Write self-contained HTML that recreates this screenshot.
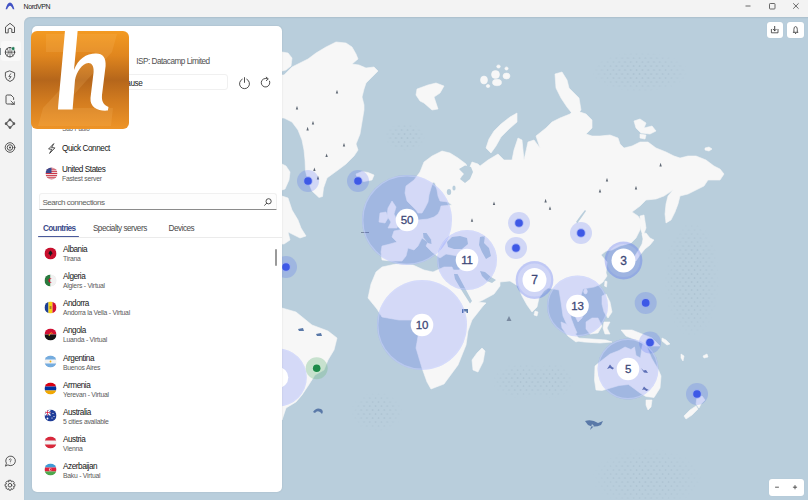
<!DOCTYPE html>
<html><head><meta charset="utf-8">
<style>
*{box-sizing:border-box}
html,body{margin:0;padding:0}
body{width:808px;height:500px;overflow:hidden;position:relative;background:#f3f3f3;font-family:"Liberation Sans",sans-serif;color:#1f1f1f}
.abs{position:absolute}
#map{position:absolute;left:23.5px;top:17px;width:785px;height:483px;background:#b9cedc;border-top-left-radius:6px;overflow:hidden}
#mapshade{position:absolute;left:23.5px;top:17px;width:785px;height:483px;border-top-left-radius:6px;box-shadow:inset 0 1px 1.5px rgba(0,0,0,0.07);pointer-events:none}
#mapsvg{position:absolute;left:-23.5px;top:-17px}
#panel{position:absolute;left:32px;top:26px;width:250px;height:466px;background:#fff;border-radius:5px;box-shadow:0 0 2px rgba(0,0,0,.12)}
.t{position:absolute;white-space:nowrap;line-height:1}
.name{font-size:8px;letter-spacing:-0.25px;color:#222}
.sub{font-size:6.3px;letter-spacing:-0.15px;color:#6a6a6a}
.flag{position:absolute;width:12px;height:12px;border-radius:50%;overflow:hidden}
.bt{font-family:"Liberation Sans",sans-serif;font-weight:normal}
</style></head>
<body>
<!-- title bar -->
<svg class="abs" style="left:5px;top:2px" width="10" height="8" viewBox="0 0 10 8"><path d="M0.6 7.2 C1.6 3.2 3.2 0.6 5 0.6 C6.8 0.6 8.4 3.2 9.4 7.2 L7.9 7.2 C7 5 6 3.8 5 3.8 C4 3.8 3 5 2.1 7.2 Z" fill="#4152c4"/></svg>
<div class="t" style="left:23.5px;top:3.3px;font-size:7px;letter-spacing:-0.4px;color:#222">NordVPN</div>
<svg class="abs" style="left:740px;top:0" width="68" height="14">
 <line x1="5.5" y1="6" x2="10.5" y2="6" stroke="#444" stroke-width="0.8"/>
 <rect x="29.5" y="3.5" width="5.5" height="5.5" rx="0.8" fill="none" stroke="#444" stroke-width="0.8"/>
 <path d="M53.2 3.3 L58.6 8.7 M58.6 3.3 L53.2 8.7" stroke="#444" stroke-width="0.8"/>
</svg>

<!-- sidebar -->
<div class="abs" style="left:1px;top:41px;width:19.5px;height:20px;background:#f9f9f9;border-radius:3px"></div>
<div class="abs" style="left:0;top:47.7px;width:1.2px;height:7.8px;background:#7f8a90"></div>
<svg class="abs" style="left:0;top:17px" width="22" height="140" viewBox="0 17 22 140" fill="none" stroke="#444" stroke-width="0.9" stroke-linejoin="round" stroke-linecap="round">
 <!-- home -->
 <path d="M5.5 32.5 V27 L10 23.3 L14.5 27 V32.5 H11.8 V29 Q10 27.4 8.2 29 V32.5 Z"/>
 <!-- globe -->
 <circle cx="10" cy="52.2" r="4.7" stroke-width="1"/>
 <path d="M10 47.5 V57 M5.3 52.2 H14.7 M7 48.5 Q10 52 7 56 M13 48.5 Q10 52 13 56" stroke-width="0.7"/>
 <circle cx="13.2" cy="48.6" r="1.9" fill="#1d7a55" stroke="#f9f9f9" stroke-width="0.6"/>
 <!-- shield -->
 <path d="M10 71 L14.6 72.8 V76.5 Q14.4 80 10 81.5 Q5.6 80 5.4 76.5 V72.8 Z"/>
 <path d="M10.7 73.8 L8.8 76.6 H11.1 L9.3 79" stroke-width="0.8"/>
 <!-- file -->
 <path d="M12.5 104 H7.2 Q6 104 6 102.8 V96.2 Q6 95 7.2 95 H11 L13.6 97.6 V99.5"/>
 <path d="M11 101 L14.3 104.3 M14.3 101.8 V104.3 H11.8" stroke-width="0.8"/>
 <!-- meshnet -->
 <path d="M10 119.5 L14.2 123.7 L10 127.9 L5.8 123.7 Z" stroke-width="1.1" stroke="#666"/>
 <circle cx="10" cy="119.8" r="1.35" fill="#5a5a5a" stroke="none"/><circle cx="10" cy="127.6" r="1.35" fill="#5a5a5a" stroke="none"/><circle cx="6.1" cy="123.7" r="1.35" fill="#5a5a5a" stroke="none"/><circle cx="13.9" cy="123.7" r="1.35" fill="#5a5a5a" stroke="none"/>
 <circle cx="10" cy="123.7" r="1.7" fill="#f3f3f3" stroke="none"/>
 <!-- target -->
 <circle cx="10" cy="147.5" r="4.8"/>
 <circle cx="10" cy="147.5" r="2.8"/>
 <circle cx="10" cy="147.5" r="1" fill="#444" stroke="none"/>
</svg>
<svg class="abs" style="left:0;top:450px" width="22" height="50" viewBox="0 450 22 50" fill="none" stroke="#444" stroke-width="0.9" stroke-linejoin="round" stroke-linecap="round">
 <path d="M5.6 465.8 L6.4 463.3 A4.8 4.8 0 1 1 8.2 465.1 Z"/>
 <path d="M9.2 459.8 Q9.6 458.6 10.6 458.8 Q11.6 459.2 11 460.2 Q10.3 460.8 10.3 461.6" stroke-width="0.7"/>
 <circle cx="10.3" cy="462.9" r="0.4" fill="#444" stroke="none"/>
 <path d="M9 480.3 H11 L11.4 481.8 L12.8 481 L14.2 482.4 L13.4 483.8 L14.9 484.2 V486.2 L13.4 486.6 L14.2 488 L12.8 489.4 L11.4 488.6 L11 490.1 H9 L8.6 488.6 L7.2 489.4 L5.8 488 L6.6 486.6 L5.1 486.2 V484.2 L6.6 483.8 L5.8 482.4 L7.2 481 L8.6 481.8 Z"/>
 <circle cx="10" cy="485.2" r="1.8"/>
</svg>

<!-- map -->
<div id="map">
<svg id="mapsvg" width="808" height="500" viewBox="0 0 808 500">
<defs>
<pattern id="dots" width="5.8" height="8" patternUnits="userSpaceOnUse"><circle cx="1.5" cy="2" r="0.85" fill="#93aabb"/><circle cx="4.4" cy="6" r="0.85" fill="#93aabb"/></pattern>
<radialGradient id="fade"><stop offset="0" stop-color="#fff" stop-opacity="1"/><stop offset="0.6" stop-color="#fff" stop-opacity="0.7"/><stop offset="1" stop-color="#fff" stop-opacity="0"/></radialGradient>
<mask id="dmask" maskUnits="userSpaceOnUse" x="0" y="0" width="808" height="500">
<ellipse cx="640" cy="72" rx="48" ry="20" fill="url(#fade)"/>
<ellipse cx="405" cy="137" rx="20" ry="14" fill="url(#fade)"/>
<ellipse cx="692" cy="280" rx="28" ry="58" fill="url(#fade)"/>
<ellipse cx="377" cy="412" rx="26" ry="20" fill="url(#fade)"/>
<ellipse cx="522" cy="381" rx="30" ry="18" fill="url(#fade)"/>
<ellipse cx="552" cy="381" rx="22" ry="18" fill="url(#fade)"/>
<ellipse cx="647" cy="478" rx="55" ry="30" fill="url(#fade)"/>
</mask>
</defs>
<rect x="0" y="0" width="808" height="500" fill="url(#dots)" mask="url(#dmask)" opacity="0.45"/>
<g id="land" fill="#f7f7f7" stroke="#f7f7f7" stroke-width="0.6" stroke-linejoin="round">
<!-- Ellesmere -->
<path d="M282 52 L288 53 L292 58 L291 66 L286 70 L282 71 Z"/>
<!-- Greenland -->
<path d="M282 75 L284 75 L292 67 L300 63 L308 59 L316 53 L326 47 L336 42 L346 43 L352 47 L356 54 L358 59 L352 64 L359 65 L366 68 L374 67 L378 71 L372 77 L366 83 L364 89 L362 97 L364 105 L364 110 L362 122 L360 134 L356 144 L358 150 L354 156 L346 164 L338 170 L327 178 L323.5 188 L322.5 196.5 L319 197.5 L312 191 L308 181 L305.5 171 L305 160 L304 150 L302 140 L298 130 L292 122 L284 118 L282 118 Z"/>
<!-- Labrador -->
<path d="M282 164 L286 166 L290 172 L289 180 L285 189 L282 190 Z M282 196 L288 198 L292 210 L298 220 L301 228 L306 236 L300 238 L292 234 L288 232 L290 240 L284 244 L282 244 Z"/>
<!-- Iceland -->
<path d="M356 174 L362 171.5 L368 172.5 L374 175 L372 180 L364 181.5 L358 180 Z"/>
<!-- Svalbard -->
<path d="M417 89 L428 85 L436 83 L444 86 L440 93 L434 97 L438 109 L432 110 L424 103 L420 101 L416 95 Z"/>
<!-- Franz Josef -->
<ellipse cx="484" cy="80" rx="3.5" ry="4"/><ellipse cx="495.5" cy="74.5" rx="4" ry="4"/><ellipse cx="497" cy="82.5" rx="4.5" ry="3.2"/><ellipse cx="506.5" cy="76" rx="3.5" ry="3"/><ellipse cx="498.5" cy="66.5" rx="1.8" ry="1.6"/><ellipse cx="506.5" cy="68.5" rx="1.6" ry="1.6"/><ellipse cx="488" cy="86" rx="1.8" ry="1.5"/>
<!-- Novaya Zemlya -->
<path d="M517 113 L510 117 L501 124 L494 131 L489 139 L486 148 L491 153 L496 146 L501 137 L509 129 L517 122 Z"/>
<!-- Severnaya Zemlya -->
<path d="M555 74 L562 72 L567 80 L569 88 L574 93 L579 98 L581 110 L575 117 L567 107 L561 98 L556 88 Z"/>
<!-- New Siberian -->
<path d="M634 121 L640 119 L646 123 L644 128 L652 126 L656 131 L650 134 L641 133 L636 128 Z"/>
<path d="M640 134 L646 135 L645 139 L640 138 Z"/>
<!-- Wrangel -->
<path d="M705 148 L709 147 L712 149 L709 151 L705 150 Z"/>
<!-- Eurasia -->
<path d="M405 193 L406 186 L414 180 L420 172 L424 162 L432 156 L442 151 L450 153 L458 158 L466 164 L468 170 L464 174 L460 178 L466 176 L472 162 L478 164 L480 166 L488 160 L498 154 L504 160 L512 160 L514 150 L518 138 L522 140 L524 160 L528 142 L534 140 L540 148 L536 136 L546 128 L552 122 L560 118 L570 114 L576 108 L580 112 L586 114 L592 120 L592 128 L586 134 L592 136 L600 136 L610 135 L618 138 L620 144 L624 148 L632 146 L640 142 L648 142 L656 148 L666 152 L674 156 L680 158 L688 156 L696 156 L706 160 L714 166 L720 169 L724 174 L720 180 L708 180 L704 186 L696 190 L688 194 L680 196 L678 204 L675 212 L671 220 L666 223 L665 214 L666 204 L668 196 L673 190 L664 196 L656 199 L646 200 L640 206 L632 212 L638 216 L642 222 L640 230 L636 238 L631 243 L620 246 L612 250 L606 251 L601 255 L607 262 L606 273 L607 276 L603 282 L599 285 L594 287 L588 288 L583 289 L581 295 L583 302 L585 310 L582 318 L578 322 L575 316 L573 308 L570 309 L571 318 L574 326 L577 333 L574 334 L568 327 L563 316 L561 302 L559 290 L554 289 L548 288 L544 291 L539 298 L537 307 L532 312 L527 305 L522 296 L518 286 L510 281 L500 282 L500 286 L494 294 L483 300 L472 305 L468 300 L465 291 L461 283 L456 276 L453 270 L459 270 L464 266 L458 256 L446 254 L440 258 L432 252 L426 246 L428 242 L422 238 L418 246 L414 250 L408 248 L406 256 L402 261 L392 261 L382 260 L381 252 L382 246 L390 244 L397 242 L392 237 L394 231 L404 229 L410 225 L418 220 L428 219 L434 217 L438 214 L440 210 L441 206 L452 205 L448 202 L440 201 L438 196 L437 190 L435 183 L433 182 L431 188 L429 195 L428 202 L425 208 L422 213 L418 213 L416 210 L412 206 L407 201 Z"/>
<!-- Great Britain / Ireland -->
<path d="M392 201 L396 207 L394 214 L398 222 L397 228 L388 228 L391 222 L387 216 L388 208 Z"/>
<path d="M380 213 L386 212 L388 218 L385 223 L379 222 Z"/>
<!-- Africa -->
<path d="M376 272 L382 267 L396 264 L413 265 L424 270 L433 272 L444 267 L452 267 L456 276 L461 283 L465 291 L469 295 L478 302 L486 303 L483 306 L472 320 L468 331 L466 345 L458 365 L444 384 L431 389 L427 382 L422 368 L416 348 L419 331 L416 320 L399 320 L382 317 L377 309 L368 298 L371 284 Z"/>
<!-- Madagascar -->
<path d="M482 348 L485 351 L483 362 L478 372 L473 370 L472 360 L477 353 Z"/>
<!-- Sri Lanka -->
<path d="M535 311 L538 312 L537 316 L534 315 Z"/>
<!-- Japan -->
<path d="M642 234 L646 233 L650 238 L654 240 L650 245 L645 249 L640 255 L636 261 L633 259 L638 251 L642 244 L643 239 Z"/>
<!-- Sakhalin / Hokkaido -->
<path d="M640 216 L644 215 L646 228 L643 236 L641 230 Z"/>
<!-- Taiwan -->
<path d="M605 281 L607 281.5 L606.5 287 L604.5 286 Z"/><ellipse cx="585.5" cy="291.5" rx="1.8" ry="2.4"/>
<!-- Philippines -->
<path d="M602 296 L606 294 L610 302 L612 312 L608 318 L604 312 L602 304 Z"/>
<!-- Sumatra -->
<path d="M561 322 L566 324 L574 332 L580 340 L576 342 L568 336 L562 328 Z"/>
<!-- Java -->
<path d="M577 338 L592 339 L606 340 L612 342 L600 343 L584 342 L577 341 Z"/>
<!-- Borneo -->
<path d="M586 322 L592 318 L598 318 L602 326 L598 333 L590 334 L586 329 Z"/>
<!-- Sulawesi -->
<path d="M604 322 L610 322 L607 328 L610 334 L605 334 L603 328 Z"/>
<!-- New Guinea -->
<path d="M621 330 L632 330 L642 334 L652 338 L660 346 L652 346 L644 344 L636 340 L626 336 Z"/>
<!-- Australia -->
<path d="M595 366 L601 361 L610 354 L619 350.5 L625 347 L631 349.5 L634.5 347 L636 355.5 L640.5 358 L642 347 L644 340 L646.5 346 L651.5 358 L658.5 370 L661 376 L660 388 L654 397.5 L646 396.5 L640 393 L634 388.5 L628.5 384.5 L619 385.5 L610.5 388 L602 390.5 L596 390 L594.5 380 Z"/>
<!-- Tasmania -->
<path d="M646 400 L652 400 L651 407 L648 410 L646 405 Z"/>
<!-- NZ -->
<path d="M697 397 L702 396 L705 400 L701 404 L699 408 L696 404 Z"/>
<path d="M696 406 L698 409 L692 415 L686 419 L684 416 L690 410 Z"/>
<!-- Pacific islands -->
<path d="M662 338 L666 340 L670 344 L667 345 L662 341 Z"/>
<path d="M681 354 L684 356 L683 361 L681 358 Z"/>
<path d="M703 356 L707 354 L708 357 L704 358 Z"/>
<!-- South America -->
<path d="M282 308 L296 312 L312 325 L328 331 L337 338 L334 350 L328 360 L324 370 L315 375 L308 386 L302 395 L296 402 L286 408 L282 420 Z"/>
</g>
<g id="water" fill="#b9cedc">
<path d="M459 169 L465 165.5 L471 167 L473 172 L470 179 L465 183 L460 179 L464 174 Z"/>
<ellipse cx="449" cy="192" rx="2.2" ry="3"/><ellipse cx="454" cy="188" rx="1.6" ry="2.5"/>
<path d="M423 233 L426.5 233 L431 239.5 L431.5 244 L428 243 L423.5 237.5 Z"/>
<path d="M576 222 Q580 216 585 210 L586 211 Q582 217 577.5 223 Z"/>
<path d="M447 242 L452 237 L460 236 L467 238 L468 244 L462 249 L454 249 L448 247 Z"/>
<path d="M480 237 L485 236 L484 243 L489 248 L491 256 L486 259 L482 252 L479 245 Z"/>
<path d="M454 274 L457.5 274 L465 288 L472 301 L470 303.5 L462 291 L455 279 Z"/>
<path d="M480 271 L485 272 L491 277 L496 280 L492 283 L487 281 L482 276 Z"/>
</g>
<g id="icons" fill="#5f6874"><path d="M337.0 89.8 L338.2 93.4 L335.8 93.4 Z"/><path d="M297.0 105.8 L298.2 109.4 L295.8 109.4 Z"/><path d="M313.0 120.8 L314.2 124.4 L311.8 124.4 Z"/><path d="M307.6 126.8 L308.8 130.4 L306.4 130.4 Z"/><path d="M344.0 142.8 L345.2 146.4 L342.8 146.4 Z"/><path d="M326.6 153.4 L327.8 157.0 L325.4 157.0 Z"/><path d="M314.4 167.4 L315.6 171.0 L313.2 171.0 Z"/><path d="M318.0 175.8 L319.2 179.4 L316.8 179.4 Z"/><path d="M660.6 162.8 L661.8 166.4 L659.4 166.4 Z"/><path d="M607.0 177.8 L608.2 181.4 L605.8 181.4 Z"/><path d="M600.0 188.8 L601.2 192.4 L598.8 192.4 Z"/><path d="M636.0 185.8 L637.2 189.4 L634.8 189.4 Z"/><path d="M494.0 201.4 L495.2 205.0 L492.8 205.0 Z"/><path d="M545.6 198.8 L546.8 202.4 L544.4 202.4 Z"/><path d="M550.0 206.2 L551.2 209.8 L548.8 209.8 Z"/><path d="M472.0 218.2 L473.2 221.8 L470.8 221.8 Z"/></g>
<g fill="#5a79a8"><path d="M313 412 Q316 407 321 409 Q324 411 322 414 L320 412 Q317 410 315 413 Z"/><path d="M585 421 Q592 419 598 423 L603 421 L601 425 Q594 428 588 425 Z M592 424 L590 430 L594 426 Z"/><path d="M462 309 H468 V313 H466.5 V311.5 H463.5 V313 H462 Z"/><path d="M607 369 L610 364.5 L612 367 L614 368 L612.5 369.5 L610 368 Z M641 368 L643.5 370.5 L646 370 L648 373 L644 372.5 Z M642 390 L644 386.5 L646 388.5 L649 390 L646.5 391 L644 389.5 Z" fill="#6676a8"/><path d="M298 329 L303 328 L304 331 L299 331 Z M316 334 L321 333 L322 336 L317 336 Z"/></g><g fill="#7a8aa0"><path d="M509 316 L511.5 321 L506.5 321 Z M361 232 H369 V233 H361 Z"/></g>
<g id="bubbles">
<circle cx="308" cy="181" r="11" fill="rgba(49,81,247,0.19)"/><circle cx="308" cy="181" r="4.7" fill="rgba(150,165,245,0.7)"/><circle cx="308" cy="181" r="3.8" fill="#3e59e6"/>
<circle cx="358" cy="181" r="11" fill="rgba(49,81,247,0.19)"/><circle cx="358" cy="181" r="4.7" fill="rgba(150,165,245,0.7)"/><circle cx="358" cy="181" r="3.8" fill="#3e59e6"/>
<circle cx="286" cy="267" r="11" fill="rgba(49,81,247,0.19)"/><circle cx="286" cy="267" r="4.7" fill="rgba(150,165,245,0.7)"/><circle cx="286" cy="267" r="3.8" fill="#3e59e6"/>
<circle cx="519" cy="223" r="11" fill="rgba(49,81,247,0.19)"/><circle cx="519" cy="223" r="4.7" fill="rgba(150,165,245,0.7)"/><circle cx="519" cy="223" r="3.8" fill="#3e59e6"/>
<circle cx="516" cy="248" r="11" fill="rgba(49,81,247,0.19)"/><circle cx="516" cy="248" r="4.7" fill="rgba(150,165,245,0.7)"/><circle cx="516" cy="248" r="3.8" fill="#3e59e6"/>
<circle cx="581" cy="233" r="11" fill="rgba(49,81,247,0.19)"/><circle cx="581" cy="233" r="4.7" fill="rgba(150,165,245,0.7)"/><circle cx="581" cy="233" r="3.8" fill="#3e59e6"/>
<circle cx="645.7" cy="302.9" r="11" fill="rgba(49,81,247,0.19)"/><circle cx="645.7" cy="302.9" r="4.7" fill="rgba(150,165,245,0.7)"/><circle cx="645.7" cy="302.9" r="3.8" fill="#3e59e6"/>
<circle cx="650" cy="342.5" r="11" fill="rgba(49,81,247,0.19)"/><circle cx="650" cy="342.5" r="4.7" fill="rgba(150,165,245,0.7)"/><circle cx="650" cy="342.5" r="3.8" fill="#3e59e6"/>
<circle cx="697" cy="394" r="11" fill="rgba(49,81,247,0.19)"/><circle cx="697" cy="394" r="4.7" fill="rgba(150,165,245,0.7)"/><circle cx="697" cy="394" r="3.8" fill="#3e59e6"/>
<circle cx="316.7" cy="368.2" r="11" fill="rgba(120,190,140,0.38)"/><circle cx="316.7" cy="368.2" r="4.6" fill="rgba(200,240,210,0.6)"/><circle cx="316.7" cy="368.2" r="3.8" fill="#1e8a4a"/>
<circle cx="407" cy="220" r="45" fill="rgba(49,81,247,0.175)"/><circle cx="407" cy="220" r="44.2" fill="none" stroke="rgba(215,222,255,0.45)" stroke-width="1.2"/><circle cx="407" cy="220" r="11.3" fill="#fff"/><text x="407" y="224.14" text-anchor="middle" class="bt" font-size="11.5" letter-spacing="-0.2" fill="#3d4878" stroke="#3d4878" stroke-width="0.3">50</text>
<circle cx="422" cy="325" r="45" fill="rgba(49,81,247,0.175)"/><circle cx="422" cy="325" r="44.2" fill="none" stroke="rgba(215,222,255,0.45)" stroke-width="1.2"/><circle cx="422" cy="325" r="11.3" fill="#fff"/><text x="422" y="329.14" text-anchor="middle" class="bt" font-size="11.5" letter-spacing="-0.2" fill="#3d4878" stroke="#3d4878" stroke-width="0.3">10</text>
<circle cx="467" cy="260" r="30" fill="rgba(49,81,247,0.175)"/><circle cx="467" cy="260" r="29.2" fill="none" stroke="rgba(215,222,255,0.45)" stroke-width="1.2"/><circle cx="467" cy="260" r="11.3" fill="#fff"/><text x="467" y="264.14" text-anchor="middle" class="bt" font-size="11.5" letter-spacing="-0.2" fill="#3d4878" stroke="#3d4878" stroke-width="0.3">11</text>
<circle cx="577.5" cy="306" r="30.5" fill="rgba(49,81,247,0.175)"/><circle cx="577.5" cy="306" r="29.7" fill="none" stroke="rgba(215,222,255,0.45)" stroke-width="1.2"/><circle cx="577.5" cy="306" r="11.3" fill="#fff"/><text x="577.5" y="310.14" text-anchor="middle" class="bt" font-size="11.5" letter-spacing="-0.2" fill="#3d4878" stroke="#3d4878" stroke-width="0.3">13</text>
<circle cx="628" cy="369" r="30.5" fill="rgba(49,81,247,0.175)"/><circle cx="628" cy="369" r="29.7" fill="none" stroke="rgba(215,222,255,0.45)" stroke-width="1.2"/><circle cx="628" cy="369" r="11.3" fill="#fff"/><text x="628" y="373.14" text-anchor="middle" class="bt" font-size="11.5" letter-spacing="-0.2" fill="#3d4878" stroke="#3d4878" stroke-width="0.3">5</text>
<circle cx="277.8" cy="377.5" r="29" fill="rgba(49,81,247,0.175)"/><circle cx="277.8" cy="377.5" r="28.2" fill="none" stroke="rgba(215,222,255,0.45)" stroke-width="1.2"/><circle cx="277.8" cy="377.5" r="10.5" fill="#fff"/>
<circle cx="534.5" cy="280" r="18.9" fill="rgba(49,81,247,0.2)"/><circle cx="534.5" cy="280" r="17.7" fill="none" stroke="rgba(49,81,247,0.09)" stroke-width="2.2"/><circle cx="534.5" cy="280" r="12" fill="#fff"/><text x="534.5" y="284.32" text-anchor="middle" class="bt" font-size="12" letter-spacing="-0.2" fill="#3d4878" stroke="#3d4878" stroke-width="0.3">7</text>
<circle cx="623.5" cy="260.5" r="18.9" fill="rgba(49,81,247,0.2)"/><circle cx="623.5" cy="260.5" r="17.7" fill="none" stroke="rgba(49,81,247,0.09)" stroke-width="2.2"/><circle cx="623.5" cy="260.5" r="12" fill="#fff"/><text x="623.5" y="264.82" text-anchor="middle" class="bt" font-size="12" letter-spacing="-0.2" fill="#3d4878" stroke="#3d4878" stroke-width="0.3">3</text>
</g>

</svg>
</div>

<div id="mapshade"></div>
<!-- map controls -->
<div class="abs" style="left:766.5px;top:22px;width:16.5px;height:16px;background:#fff;border-radius:3px;box-shadow:0 0 1px rgba(0,0,0,.08)"></div>
<div class="abs" style="left:787px;top:22px;width:16.5px;height:16px;background:#fff;border-radius:3px;box-shadow:0 0 1px rgba(0,0,0,.08)"></div>
<svg class="abs" style="left:766px;top:22px" width="40" height="16" viewBox="766 22 40 16" fill="none" stroke="#333" stroke-width="0.8" stroke-linecap="round" stroke-linejoin="round">
 <path d="M771.4 29.4 V32.8 H778 V29.4"/><path d="M774.7 26.4 V30.8 M773.1 29.2 L774.7 30.8 L776.3 29.2" stroke-width="0.9"/>
 <path d="M793.3 32.3 H797.9 M793.9 32.1 V29.4 Q793.9 26.6 795.6 26.6 Q797.3 26.6 797.3 29.4 V32.1"/><path d="M795.6 33.3 V33.5" stroke-width="1"/>
</svg>
<div class="abs" style="left:768.5px;top:478.5px;width:35px;height:17.5px;background:#fff;border-radius:3px;box-shadow:0 0 1px rgba(0,0,0,.08)"></div>
<svg class="abs" style="left:768px;top:478px" width="36" height="18" viewBox="768 478 36 18" stroke="#333" stroke-width="0.8" stroke-linecap="round">
 <path d="M775.5 487.2 H778.5"/><path d="M793.3 487.2 H796.7 M795 485.5 V488.9"/>
</svg>

<!-- panel -->
<div id="panel"><div style="position:absolute;left:-32px;top:-26px;width:808px;height:500px">
<div class="t" style="left:136.30px;top:58.26px;font-size:8.2px;letter-spacing:-0.5px;color:#505050;">ISP: Datacamp Limited</div>
<div class="abs" style="left:38.5px;top:73.5px;width:189px;height:16.5px;border:1px solid #f0f0f0;border-radius:3px"></div>
<div class="t" style="left:121.30px;top:80.06px;font-size:8.2px;letter-spacing:-0.45px;color:#1a1a1a;">Pause</div>
<svg class="abs" style="left:236px;top:75px" width="40" height="16" viewBox="236 75 40 16" fill="none" stroke="#3a3a3a" stroke-width="0.9" stroke-linecap="round">
<path d="M242.2 79.2 A5 5 0 1 0 246.8 79.2"/><path d="M244.5 77.6 V82.4"/>
<path d="M269.6 81.2 A4.3 4.3 0 1 1 266.9 78.6"/><path d="M266.2 77.2 L268.3 78.9 L266.4 80.6" stroke-linejoin="round"/>
</svg>
<div class="t" style="left:62.30px;top:125.87px;font-size:6.3px;letter-spacing:-0.2px;color:#5a5a5a;">São Paulo</div>
<svg class="abs" style="left:46px;top:142px" width="12" height="13" viewBox="46 142 12 13" fill="none" stroke="#333" stroke-width="0.85" stroke-linejoin="round"><path d="M53.8 143.6 L48.6 149 L51.9 149.3 L49.6 153.4 L54.9 147.9 L51.6 147.6 Z"/></svg>
<div class="t" style="left:62.00px;top:145.16px;font-size:8.2px;letter-spacing:-0.45px;color:#151515;">Quick Connect</div>
<svg class="abs" style="left:45.1px;top:166.5px" width="13" height="13" viewBox="-0.5 -0.5 13 13"><defs><clipPath id="cus"><circle cx="6" cy="6" r="6"/></clipPath></defs><g clip-path="url(#cus)"><rect width="12" height="12" fill="#f4f4f4"/><rect y="0" width="12" height="0.95" fill="#c8283b"/><rect y="1.85" width="12" height="0.95" fill="#c8283b"/><rect y="3.7" width="12" height="0.95" fill="#c8283b"/><rect y="5.55" width="12" height="0.95" fill="#c8283b"/><rect y="7.4" width="12" height="0.95" fill="#c8283b"/><rect y="9.25" width="12" height="0.95" fill="#c8283b"/><rect y="11.1" width="12" height="0.95" fill="#c8283b"/><rect width="6" height="5.5" fill="#3c4a8e"/></g><circle cx="6" cy="6" r="5.85" fill="none" stroke="rgba(0,0,0,0.08)" stroke-width="0.3"/></svg>
<div class="t" style="left:62.00px;top:165.76px;font-size:8.2px;letter-spacing:-0.45px;color:#151515;">United States</div>
<div class="t" style="left:62.00px;top:175.64px;font-size:6.8px;letter-spacing:-0.24px;color:#5a5a5a;">Fastest server</div>
<div class="abs" style="left:38.5px;top:193px;width:238px;height:17px;border-radius:3px 3px 0 0;border:1px solid #f0f0f0;border-bottom:1.2px solid #8a8a8a;background:#fdfdfd"></div>
<div class="t" style="left:42.40px;top:198.93px;font-size:8px;letter-spacing:-0.45px;color:#606060;">Search connections</div>
<svg class="abs" style="left:262px;top:196px" width="12" height="12" viewBox="262 196 12 12" fill="none" stroke="#333" stroke-width="0.85"><circle cx="268.6" cy="201.3" r="2.6"/><path d="M266.7 203.2 L264.6 205.3" stroke-linecap="round"/></svg>
<div class="t" style="left:43.00px;top:225.26px;font-size:8.2px;letter-spacing:-0.65px;color:#3a4a8a;font-weight:bold;">Countries</div>
<div class="t" style="left:92.90px;top:225.26px;font-size:8.2px;letter-spacing:-0.5px;color:#4a4a4a;">Specialty servers</div>
<div class="t" style="left:168.60px;top:225.26px;font-size:8.2px;letter-spacing:-0.5px;color:#4a4a4a;">Devices</div>
<div class="abs" style="left:38px;top:236.8px;width:244px;height:0.8px;background:#ebebeb"></div>
<div class="abs" style="left:38.3px;top:235.6px;width:40.7px;height:1.6px;border-radius:1px;background:#4a5a9c"></div>
<svg class="abs" style="left:43.5px;top:246.5px" width="13" height="13" viewBox="-0.5 -0.5 13 13"><defs><clipPath id="cal"><circle cx="6" cy="6" r="6"/></clipPath></defs><g clip-path="url(#cal)"><rect width="12" height="12" fill="#c8102e"/><path d="M6 3 L7.5 4.5 L8 6.5 L6.8 7 L6 9 L5.2 7 L4 6.5 L4.5 4.5 Z" fill="#1a1a1a"/></g><circle cx="6" cy="6" r="5.85" fill="none" stroke="rgba(0,0,0,0.08)" stroke-width="0.3"/></svg>
<div class="t" style="left:63.00px;top:246.16px;font-size:8.2px;letter-spacing:-0.45px;color:#151515;">Albania</div>
<div class="t" style="left:63.00px;top:256.14px;font-size:6.8px;letter-spacing:-0.24px;color:#5a5a5a;">Tirana</div>
<svg class="abs" style="left:43.5px;top:273.6px" width="13" height="13" viewBox="-0.5 -0.5 13 13"><defs><clipPath id="cdz"><circle cx="6" cy="6" r="6"/></clipPath></defs><g clip-path="url(#cdz)"><rect width="6" height="12" fill="#2a7a3e"/><rect x="6" width="6" height="12" fill="#f2f2f2"/><path d="M7.3 4 A2.3 2.3 0 1 0 7.3 8 A1.8 1.8 0 1 1 7.3 4Z" fill="#d21034"/></g><circle cx="6" cy="6" r="5.85" fill="none" stroke="rgba(0,0,0,0.08)" stroke-width="0.3"/></svg>
<div class="t" style="left:63.00px;top:273.26px;font-size:8.2px;letter-spacing:-0.45px;color:#151515;">Algeria</div>
<div class="t" style="left:63.00px;top:283.24px;font-size:6.8px;letter-spacing:-0.24px;color:#5a5a5a;">Algiers - Virtual</div>
<svg class="abs" style="left:43.5px;top:300.7px" width="13" height="13" viewBox="-0.5 -0.5 13 13"><defs><clipPath id="cad"><circle cx="6" cy="6" r="6"/></clipPath></defs><g clip-path="url(#cad)"><rect width="4" height="12" fill="#1c3f94"/><rect x="4" width="4" height="12" fill="#f6d313"/><rect x="8" width="4" height="12" fill="#d21034"/><rect x="5.1" y="4.5" width="1.8" height="3" fill="#b07a2a"/></g><circle cx="6" cy="6" r="5.85" fill="none" stroke="rgba(0,0,0,0.08)" stroke-width="0.3"/></svg>
<div class="t" style="left:63.00px;top:300.36px;font-size:8.2px;letter-spacing:-0.45px;color:#151515;">Andorra</div>
<div class="t" style="left:63.00px;top:310.34px;font-size:6.8px;letter-spacing:-0.24px;color:#5a5a5a;">Andorra la Vella - Virtual</div>
<svg class="abs" style="left:43.5px;top:327.8px" width="13" height="13" viewBox="-0.5 -0.5 13 13"><defs><clipPath id="cao"><circle cx="6" cy="6" r="6"/></clipPath></defs><g clip-path="url(#cao)"><rect width="12" height="6" fill="#d21034"/><rect y="6" width="12" height="6" fill="#141414"/><path d="M4.5 7.5 Q6 3 8 5" stroke="#f6c213" stroke-width="0.9" fill="none"/></g><circle cx="6" cy="6" r="5.85" fill="none" stroke="rgba(0,0,0,0.08)" stroke-width="0.3"/></svg>
<div class="t" style="left:63.00px;top:327.46px;font-size:8.2px;letter-spacing:-0.45px;color:#151515;">Angola</div>
<div class="t" style="left:63.00px;top:337.44px;font-size:6.8px;letter-spacing:-0.24px;color:#5a5a5a;">Luanda - Virtual</div>
<svg class="abs" style="left:43.5px;top:354.9px" width="13" height="13" viewBox="-0.5 -0.5 13 13"><defs><clipPath id="car"><circle cx="6" cy="6" r="6"/></clipPath></defs><g clip-path="url(#car)"><rect width="12" height="12" fill="#f4f4f4"/><rect width="12" height="4" fill="#74acdf"/><rect y="8" width="12" height="4" fill="#74acdf"/><circle cx="6" cy="6" r="0.9" fill="#f6b40e"/></g><circle cx="6" cy="6" r="5.85" fill="none" stroke="rgba(0,0,0,0.08)" stroke-width="0.3"/></svg>
<div class="t" style="left:63.00px;top:354.56px;font-size:8.2px;letter-spacing:-0.45px;color:#151515;">Argentina</div>
<div class="t" style="left:63.00px;top:364.54px;font-size:6.8px;letter-spacing:-0.24px;color:#5a5a5a;">Buenos Aires</div>
<svg class="abs" style="left:43.5px;top:382.0px" width="13" height="13" viewBox="-0.5 -0.5 13 13"><defs><clipPath id="cam"><circle cx="6" cy="6" r="6"/></clipPath></defs><g clip-path="url(#cam)"><rect width="12" height="4" fill="#d90012"/><rect y="4" width="12" height="4" fill="#0033a0"/><rect y="8" width="12" height="4" fill="#f2a800"/></g><circle cx="6" cy="6" r="5.85" fill="none" stroke="rgba(0,0,0,0.08)" stroke-width="0.3"/></svg>
<div class="t" style="left:63.00px;top:381.66px;font-size:8.2px;letter-spacing:-0.45px;color:#151515;">Armenia</div>
<div class="t" style="left:63.00px;top:391.64px;font-size:6.8px;letter-spacing:-0.24px;color:#5a5a5a;">Yerevan - Virtual</div>
<svg class="abs" style="left:43.5px;top:409.1px" width="13" height="13" viewBox="-0.5 -0.5 13 13"><defs><clipPath id="cau"><circle cx="6" cy="6" r="6"/></clipPath></defs><g clip-path="url(#cau)"><rect width="12" height="12" fill="#1f3d99"/><path d="M0 0 L6 6 M6 0 L0 6" stroke="#fff" stroke-width="1.2"/><path d="M3 0 V6 M0 3 H6" stroke="#fff" stroke-width="1.4"/><path d="M3 0 V6 M0 3 H6" stroke="#d21034" stroke-width="0.7"/><circle cx="8.5" cy="4" r="0.6" fill="#fff"/><circle cx="9.5" cy="7" r="0.6" fill="#fff"/><circle cx="7.5" cy="8.5" r="0.6" fill="#fff"/><circle cx="3" cy="9" r="0.9" fill="#fff"/></g><circle cx="6" cy="6" r="5.85" fill="none" stroke="rgba(0,0,0,0.08)" stroke-width="0.3"/></svg>
<div class="t" style="left:63.00px;top:408.76px;font-size:8.2px;letter-spacing:-0.45px;color:#151515;">Australia</div>
<div class="t" style="left:63.00px;top:418.74px;font-size:6.8px;letter-spacing:-0.24px;color:#5a5a5a;">5 cities available</div>
<svg class="abs" style="left:43.5px;top:436.2px" width="13" height="13" viewBox="-0.5 -0.5 13 13"><defs><clipPath id="cat"><circle cx="6" cy="6" r="6"/></clipPath></defs><g clip-path="url(#cat)"><rect width="12" height="12" fill="#f4f4f4"/><rect width="12" height="4" fill="#d8283b"/><rect y="8" width="12" height="4" fill="#d8283b"/></g><circle cx="6" cy="6" r="5.85" fill="none" stroke="rgba(0,0,0,0.08)" stroke-width="0.3"/></svg>
<div class="t" style="left:63.00px;top:435.86px;font-size:8.2px;letter-spacing:-0.45px;color:#151515;">Austria</div>
<div class="t" style="left:63.00px;top:445.84px;font-size:6.8px;letter-spacing:-0.24px;color:#5a5a5a;">Vienna</div>
<svg class="abs" style="left:43.5px;top:463.3px" width="13" height="13" viewBox="-0.5 -0.5 13 13"><defs><clipPath id="caz"><circle cx="6" cy="6" r="6"/></clipPath></defs><g clip-path="url(#caz)"><rect width="12" height="4" fill="#3f9bd6"/><rect y="4" width="12" height="4" fill="#e1203c"/><rect y="8" width="12" height="4" fill="#4ea84d"/><circle cx="5.8" cy="6" r="1.3" fill="#fff"/><circle cx="6.2" cy="6" r="1.05" fill="#e1203c"/></g><circle cx="6" cy="6" r="5.85" fill="none" stroke="rgba(0,0,0,0.08)" stroke-width="0.3"/></svg>
<div class="t" style="left:63.00px;top:462.96px;font-size:8.2px;letter-spacing:-0.45px;color:#151515;">Azerbaijan</div>
<div class="t" style="left:63.00px;top:472.94px;font-size:6.8px;letter-spacing:-0.24px;color:#5a5a5a;">Baku - Virtual</div>
<div class="abs" style="left:275px;top:249px;width:2px;height:17px;border-radius:1px;background:#9a9a9a"></div>
</div></div>
<div class="abs" style="left:31px;top:31px;width:98px;height:98px;border-radius:6px;overflow:hidden;background:linear-gradient(180deg,#f39a22 0%,#e0861e 25%,#b5661b 50%,#d07a1f 70%,#ee9427 100%)">
<svg class="abs" style="left:0;top:0" width="98" height="98" viewBox="31 31 98 98">
<path d="M46 34 H117 L112 52 L62 108 H113 L111 126 H38 L43 108 L95 52 H46 Z" fill="rgba(255,200,120,0.16)"/>
</svg>
</div>
<svg class="abs" style="left:31px;top:22px" width="98" height="107" viewBox="31 22 98 107">
<path d="M65.3 27 L78 27 L74 70 C78 59 86 53.5 96 53.5 C103 53.5 106.2 58 105.6 66 L102 95 C101.5 101 103 104.5 108.5 107 L107.8 110.6 C99 111.5 89.8 108 90.5 98 L93.6 72 C94 65.5 91.5 62.8 88.3 63 C82 63.5 76.5 72 75 80 L72.6 109.6 L58 109.6 C59.5 90 62 65 65.3 27 Z" fill="#fff"/>
</svg>


</body></html>
